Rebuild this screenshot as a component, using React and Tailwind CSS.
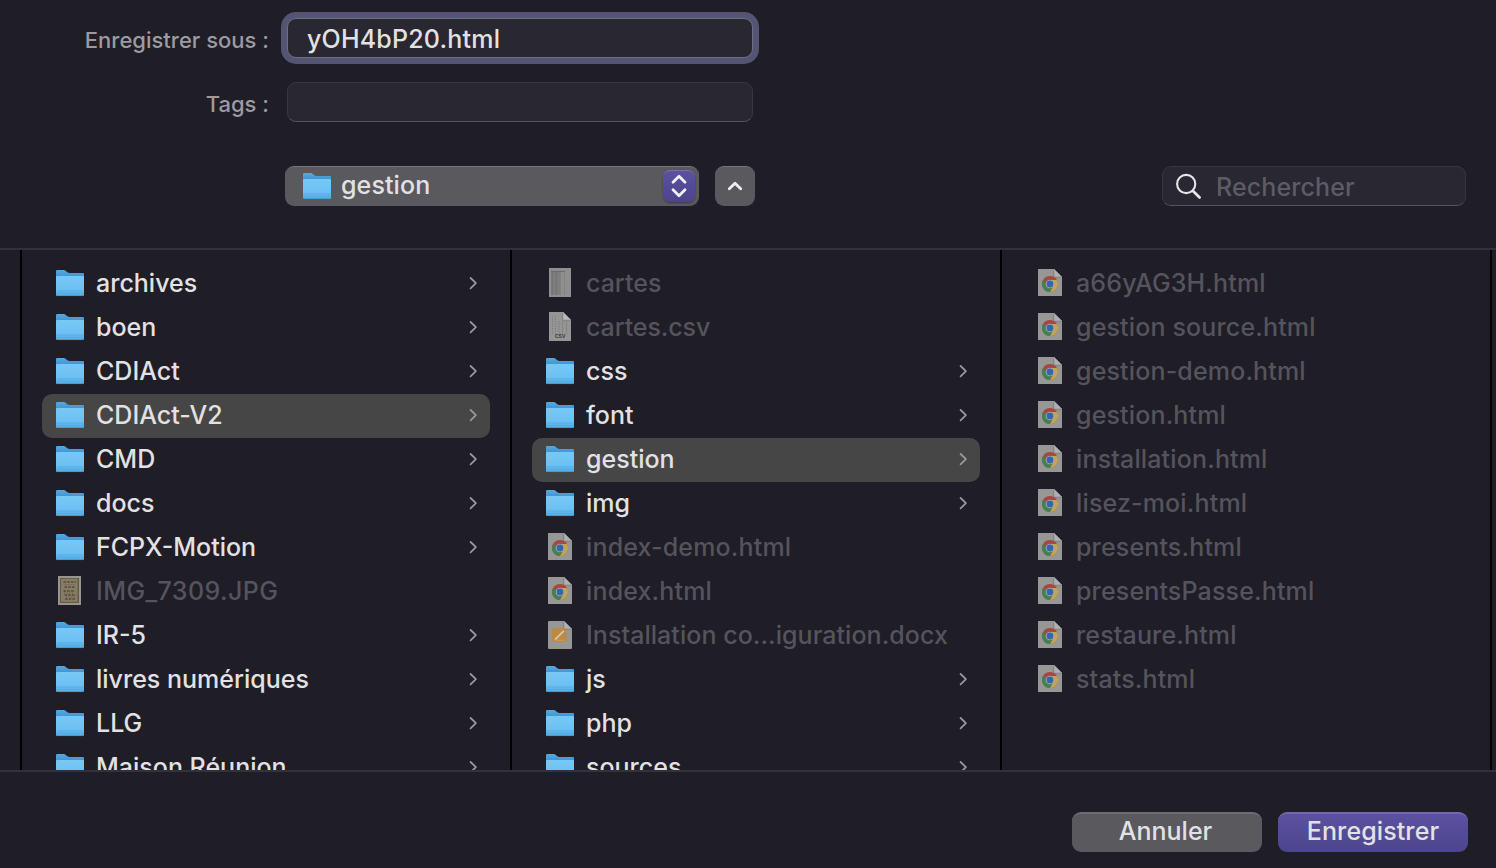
const columns = [
  [
    { name: "archives", kind: "folder" },
    { name: "boen", kind: "folder" },
    { name: "CDIAct", kind: "folder" },
    { name: "CDIAct-V2", kind: "folder", selected: true },
    { name: "CMD", kind: "folder" },
    { name: "docs", kind: "folder" },
    { name: "FCPX-Motion", kind: "folder" },
    { name: "IMG_7309.JPG", kind: "photo" },
    { name: "IR-5", kind: "folder" },
    { name: "livres numériques", kind: "folder" },
    { name: "LLG", kind: "folder" },
    { name: "Maison Réunion", kind: "folder" },
  ],
  [
    { name: "cartes", kind: "sheet" },
    { name: "cartes.csv", kind: "csv" },
    { name: "css", kind: "folder" },
    { name: "font", kind: "folder" },
    { name: "gestion", kind: "folder", selected: true },
    { name: "img", kind: "folder" },
    { name: "index-demo.html", kind: "html" },
    { name: "index.html", kind: "html" },
    { name: "Installation co...iguration.docx", kind: "docx" },
    { name: "js", kind: "folder" },
    { name: "php", kind: "folder" },
    { name: "sources", kind: "folder" },
  ],
  [
    { name: "a66yAG3H.html", kind: "html" },
    { name: "gestion source.html", kind: "html" },
    { name: "gestion-demo.html", kind: "html" },
    { name: "gestion.html", kind: "html" },
    { name: "installation.html", kind: "html" },
    { name: "lisez-moi.html", kind: "html" },
    { name: "presents.html", kind: "html" },
    { name: "presentsPasse.html", kind: "html" },
    { name: "restaure.html", kind: "html" },
    { name: "stats.html", kind: "html" },
  ],
];

const tracking = {
  folder: "tracking-normal",
  html: "tracking-[0.15px]",
  docx: "tracking-[0.05px]",
  sheet: "tracking-normal",
  csv: "tracking-[-0.1px]",
  photo: "tracking-[0.42px]",
};

function Gradients() {
  return (
    <svg className="absolute size-0" aria-hidden="true">
      <defs>
        <linearGradient id="folderFront" x1="0" y1="0" x2="0" y2="1">
          <stop offset="0" stopColor="#78c8f6" />
          <stop offset="0.65" stopColor="#6cc1f3" />
          <stop offset="1" stopColor="#55ade6" />
        </linearGradient>
        <linearGradient id="folderBack" x1="0" y1="0" x2="0" y2="1">
          <stop offset="0" stopColor="#56a9e0" />
          <stop offset="1" stopColor="#3888c8" />
        </linearGradient>
      </defs>
    </svg>
  );
}

function FolderIcon() {
  return (
    <svg className="h-8 w-7 shrink-0" viewBox="0 0 28 32">
      <path d="M0 3.2Q0 2 1.2 2H7.6Q8.8 2 9.8 2.9L11.3 4.2Q12.2 5 13.4 5H27Q28 5 28 6V12H0Z" fill="url(#folderBack)" />
      <path d="M0 9Q0 7.9 1.2 7.9H26.8Q28 7.9 28 9V26.8Q28 28 26.8 28H1.2Q0 28 0 26.8Z" fill="url(#folderFront)" />
      <path d="M0.3 23H27.7M0.3 25.4H27.7" stroke="#479fd8" strokeWidth="0.6" opacity="0.75" />
      <path d="M0.5 27.6H27.5" stroke="#3f93cd" strokeWidth="0.8" />
    </svg>
  );
}

function Page({ h = 27, r = 0 }) {
  return (
    <>
      <rect x="2" y="1" width="10" height={h} rx={r} fill="#979795" />
      <path d={h > 27 ? "M3 1H18L26 9V28Q26 29 25 29H3Z" : "M3 1H18L26 9V28H3Z"} fill="#979795" />
      <path d="M18 1L26 9H18.6Q18 9 18 8.4Z" fill="#b0b0ae" />
      <path d="M17.8 2V9.2H25" fill="none" stroke="#747474" strokeWidth="0.7" />
    </>
  );
}

function HtmlIcon() {
  return (
    <svg className="h-8 w-7 shrink-0" viewBox="0 0 28 32">
      <Page />
      <circle cx="14" cy="16" r="8" fill="#a8463f" />
      <path d="M14 16L7.07 12A8 8 0 0 0 14 24L17.46 18Z" fill="#438154" />
      <path d="M14 12H20.93A8 8 0 0 1 14 24L17.46 18Z" fill="#c0a552" />
      <circle cx="14" cy="16" r="4.3" fill="#acaeb2" />
      <circle cx="14" cy="16" r="3.4" fill="#3863ad" />
    </svg>
  );
}

function DocxIcon() {
  return (
    <svg className="h-8 w-7 shrink-0" viewBox="0 0 28 32">
      <Page h={28} r={1} />
      <rect x="6" y="8" width="14.5" height="14" rx="3" fill="#be8a42" />
      <path d="M9.5 19.2L17.3 11.4" stroke="#d0c9bd" strokeWidth="1.8" strokeLinecap="round" />
      <path d="M8.6 20.2H18" stroke="#d2a868" strokeWidth="0.7" />
    </svg>
  );
}

function SheetIcon() {
  return (
    <svg className="h-8 w-7 shrink-0" viewBox="0 0 28 32">
      <rect x="3" y="0" width="22" height="29" fill="#8f8f8f" />
      <path d="M5 3.5H14.5V27H5Z" fill="#7e7e7e" />
      <path d="M5 3.5H19" stroke="#6c6c6c" strokeWidth="1.2" />
      <path d="M6.2 4V27M10.3 4V27" stroke="#727272" strokeWidth="1" />
      <path d="M14.5 4V27M18.5 4V27" stroke="#808080" strokeWidth="0.7" />
    </svg>
  );
}

function CsvIcon() {
  return (
    <svg className="h-8 w-7 shrink-0" viewBox="0 0 28 32">
      <path d="M3 0H17L25 8V29H3Z" fill="#959595" />
      <path d="M6.5 4V22M9.5 4V22" stroke="#7e7e7e" strokeWidth="1" strokeDasharray="1.4 1" />
      <path d="M13 9V22M16.5 9V22M20.5 9V22" stroke="#828282" strokeWidth="0.8" />
      <path d="M17 0L25 8H17.6Q17 8 17 7.4Z" fill="#b9b9b9" />
      <path d="M16.8 1V8.2H24" fill="none" stroke="#707070" strokeWidth="0.6" />
      <text x="14.2" y="26.4" textAnchor="middle" fontSize="5" fontWeight="700" fill="#3e3e40" fontFamily="Inter, sans-serif">
        CSV
      </text>
    </svg>
  );
}

function PhotoIcon() {
  return (
    <svg className="h-8 w-7 shrink-0" viewBox="0 0 28 32">
      <rect x="2" y="0" width="23" height="29" fill="#96958f" />
      <rect x="4" y="2" width="19" height="25" fill="#655b45" />
      <rect x="5" y="2.8" width="16.5" height="23" fill="#877d66" />
      <path d="M7.5 6H20M8.5 11H19M7.5 15H19M8.5 19H20M9 23H19" stroke="#65573f" strokeWidth="2" strokeDasharray="2.6 1.1" />
      <path d="M9 8.5H19M8 17H18M10 21H19" stroke="#6c5a49" strokeWidth="1" strokeDasharray="1.2 1.4" />
    </svg>
  );
}

const icons = {
  folder: FolderIcon,
  html: HtmlIcon,
  docx: DocxIcon,
  sheet: SheetIcon,
  csv: CsvIcon,
  photo: PhotoIcon,
};

function Row({ name, kind, selected }) {
  const Icon = icons[kind];
  const isFolder = kind === "folder";
  return (
    <li className={`flex h-11 shrink-0 items-center rounded-[10px] pr-3 pl-3.5 ${selected ? "bg-[#464646]" : ""}`}>
      <Icon />
      <span className={`ml-3 flex-1 pb-0.5 whitespace-nowrap ${tracking[kind]} ${isFolder ? "text-[#e2e1e3]" : "text-[#55545c]"}`}>
        {name}
      </span>
      {isFolder && (
        <svg className="mb-0.5 h-4 w-2.5 shrink-0" viewBox="0 0 10 16" fill="none" stroke="#98979b" strokeWidth="1.8" strokeLinecap="round" strokeLinejoin="round">
          <path d="M2.6 3L7.9 8.2L2.6 13.4" />
        </svg>
      )}
    </li>
  );
}

export default function App() {
  return (
    <div className="flex h-[868px] w-[1496px] flex-col overflow-hidden bg-[#1f1d26] font-['Inter',sans-serif] text-[25px] leading-[30px] font-medium text-[#e2e1e3]">
      <Gradients />
      <header className="h-[250px] shrink-0 border-b-2 border-[#33313a] pt-3">
        <div className="flex h-[52px] items-center">
          <label className="w-[269px] pt-1 text-right text-[22px] text-[#9c9ba0]">Enregistrer sous :</label>
          <div className="ml-3 h-[52px] w-[478px] rounded-[15px] bg-[#555473] p-1.5">
            <div className="flex h-10 items-center rounded-[9px] border border-[#706f83] bg-[#292730] pt-px pl-[19px] tracking-[0.2px]">
              yOH4bP20.html
            </div>
          </div>
        </div>
        <div className="mt-[18px] flex h-10 items-center">
          <label className="w-[269px] pt-1 text-right text-[22px] text-[#9c9ba0]">Tags :</label>
          <div className="ml-[18px] h-10 w-[466px] rounded-[9px] border border-[#38363f] border-b-[#56545d] bg-[#292730]" />
        </div>
        <div className="mt-11 flex h-10 items-center pr-[30px] pl-[285px]">
          <div className="flex h-10 w-[414px] items-center rounded-[9px] border-t border-[#77767b] bg-[#5a595e] pr-1 pl-[18px]">
            <FolderIcon />
            <span className="ml-2.5 flex-1 pb-1 tracking-[0.1px]">gestion</span>
            <div className="mb-px flex size-8 items-center justify-center rounded-[7px] border-t border-[#7870ae] bg-linear-to-b from-[#5b51a1] to-[#4c448c] pb-px shadow-[0_1px_2px_rgba(0,0,0,0.35)]">
              <svg className="h-6 w-5" viewBox="0 0 20 24" fill="none" stroke="#f1f0f6" strokeWidth="2.8" strokeLinecap="round" strokeLinejoin="round">
                <path d="M4 8.3L10 2.3L16 8.3M4 15.7L10 21.7L16 15.7" />
              </svg>
            </div>
          </div>
          <div className="ml-4 flex size-10 items-center justify-center rounded-[9px] border-t border-[#77767b] bg-[#5a595e] pb-0.5">
            <svg className="h-4 w-5" viewBox="0 0 20 16" fill="none" stroke="#eeedf0" strokeWidth="2.8" strokeLinecap="round" strokeLinejoin="round">
              <path d="M4.3 10.8L10 5.2L15.7 10.8" />
            </svg>
          </div>
          <div className="ml-auto flex h-10 w-[304px] items-center rounded-[9px] border border-[#38363f] border-b-[#56545d] bg-[#292730] pt-px pl-3">
            <svg className="mb-px size-7 shrink-0" viewBox="0 0 28 28" fill="none" stroke="#e6e5e8" strokeLinecap="round">
              <circle cx="11.2" cy="12" r="9.1" strokeWidth="2.1" />
              <path d="M18 19L24.6 25.4" strokeWidth="2.8" />
            </svg>
            <span className="ml-[13px] tracking-[0.1px] text-[#5d5c64]">Rechercher</span>
          </div>
        </div>
      </header>

      <main className="flex h-[520px] shrink-0 overflow-hidden border-l-[20px] border-[#1f1d26]">
        {columns.map((items, index) => (
          <ul key={index} className="flex w-[490px] shrink-0 flex-col border-l-2 border-black pt-3 pr-5 pl-5">
            {items.map((item) => (
              <Row key={item.name} {...item} />
            ))}
          </ul>
        ))}
        <div className="w-1.5 shrink-0 border-l-2 border-black" />
      </main>

      <footer className="flex h-[98px] shrink-0 justify-end gap-4 border-t-2 border-[#33313a] pt-10 pr-7">
        <button className="flex h-10 w-[190px] items-center justify-center rounded-[9px] border-t-2 border-[#6d6c72] bg-[#5a595e] pr-[3px] pb-1">
          Annuler
        </button>
        <button className="flex h-10 w-[190px] items-center justify-center rounded-[9px] border-t-2 border-[#7067ae] bg-linear-to-b from-[#5b51a1] to-[#4d458d] pb-1 tracking-[0.1px]">
          Enregistrer
        </button>
      </footer>
    </div>
  );
}
